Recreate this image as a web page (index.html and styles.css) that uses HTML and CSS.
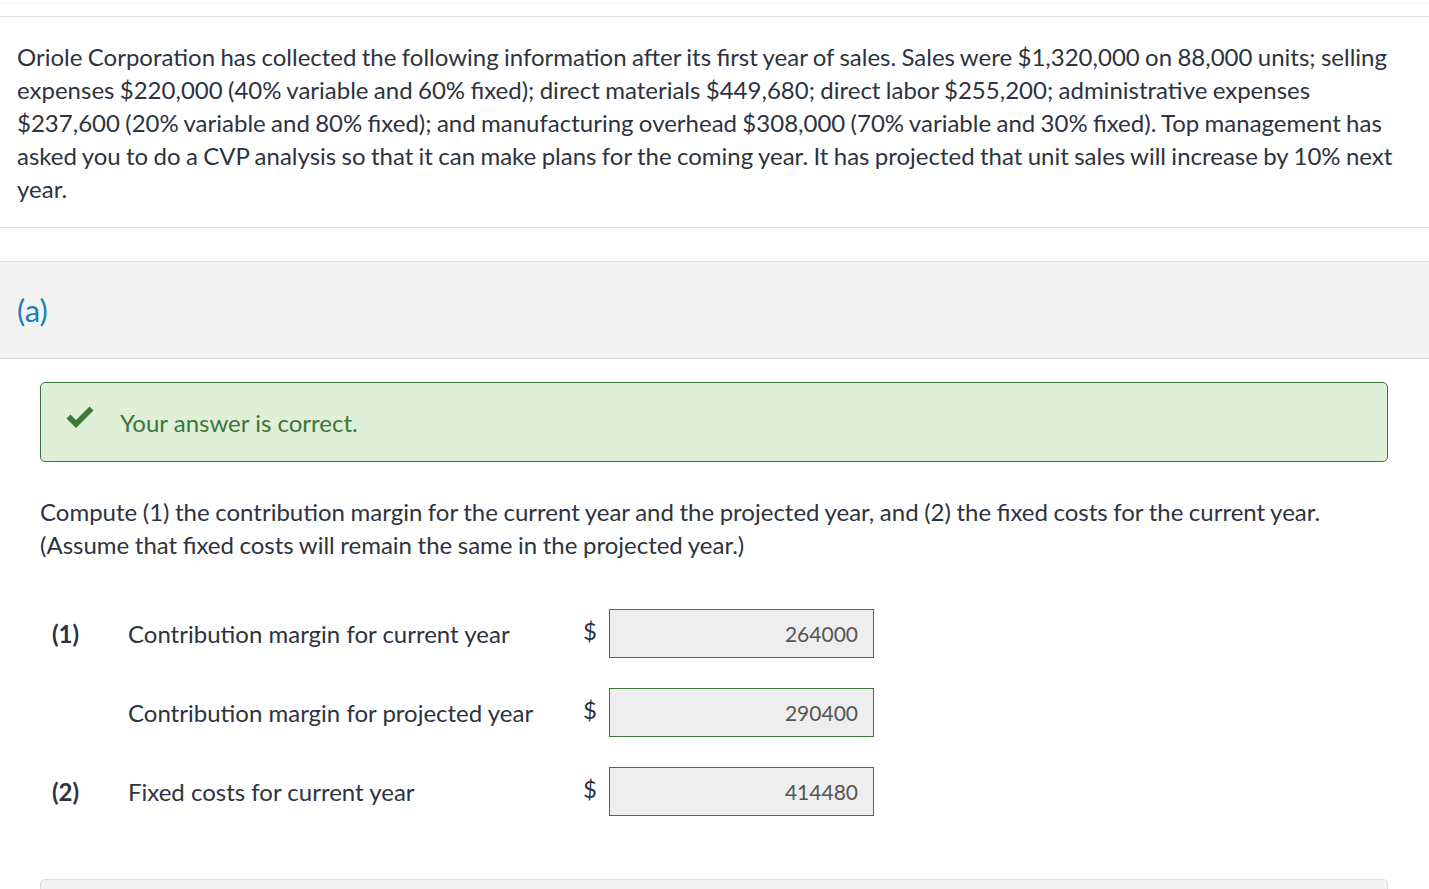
FILE: index.html
```html
<!DOCTYPE html>
<html>
<head>
<meta charset="utf-8">
<link rel="stylesheet" href="styles.css">
</head>
<body>
<div class="topbar"></div>
<div class="stem">
  <p>Oriole Corporation has collected the following information after its first year of sales. Sales were $1,320,000 on 88,000 units; selling expenses $220,000 (40% variable and 60% fixed); direct materials $449,680; direct labor $255,200; administrative expenses $237,600 (20% variable and 80% fixed); and manufacturing overhead $308,000 (70% variable and 30% fixed). Top management has asked you to do a CVP analysis so that it can make plans for the coming year. It has projected that unit sales will increase by 10% next year.</p>
</div>
<div class="part-header"><span class="part-label">(a)</span></div>
<div class="part-body">
  <div class="feedback">
    <svg class="check" width="30" height="24" viewBox="0 0 30 24"><path d="M1.5 12.5 L5.5 8.5 L11 14 L24.5 0.5 L28.5 4.5 L11 22 Z" fill="#3b7a3b"/></svg>
    <span class="feedback-text">Your answer is correct.</span>
  </div>
  <p class="question">Compute (1) the contribution margin for the current year and the projected year, and (2) the fixed costs for the current year. (Assume that fixed costs will remain the same in the projected year.)</p>
  <div class="answers">
    <div class="row">
      <span class="num">(1)</span>
      <span class="label">Contribution margin for current year</span>
      <span class="dollar">$</span>
      <div class="input">264000</div>
    </div>
    <div class="row">
      <span class="num"></span>
      <span class="label">Contribution margin for projected year</span>
      <span class="dollar">$</span>
      <div class="input">290400</div>
    </div>
    <div class="row">
      <span class="num">(2)</span>
      <span class="label">Fixed costs for current year</span>
      <span class="dollar">$</span>
      <div class="input">414480</div>
    </div>
  </div>
  <div class="next-box"></div>
</div>
</body>
</html>
```
FILE: styles.css
```css
html, body {
  margin: 0;
  padding: 0;
  background: #fff;
}
body {
  font-family: Lato, "Open Sans", sans-serif;
  color: #2d3340;
  font-size: 24px;
  overflow: hidden;
  height: 889px;
}
.topbar {
  height: 3px;
  border-bottom: 1px solid #eeeeee;
  margin-bottom: 12px;
}
.stem {
  border-top: 1px solid #dddddd;
  border-bottom: 1px solid #dddddd;
  padding: 23px 17px 22px 17px;
}
.stem p {
  margin: 0;
  line-height: 33px;
  word-spacing: -0.8px;
}
.part-header {
  margin-top: 33px;
  background: #f3f3f3;
  border-top: 1px solid #dddddd;
  border-bottom: 1px solid #dddddd;
  height: 96px;
  display: flex;
  align-items: center;
  padding-left: 17px;
}
.part-label {
  color: #1a7fba;
  font-size: 31px;
}
.part-body {
  padding: 23px 41px 0 40px;
}
.feedback {
  background: #dfefd8;
  border: 1px solid #3c7a3c;
  border-radius: 5px;
  height: 78px;
  display: flex;
  align-items: center;
  padding-left: 24px;
}
.check {
  margin-top: -8px;
  margin-right: 25px;
}
.feedback-text {
  color: #3c763d;
  font-size: 24px;
}
.question {
  margin: 33px 0 0 0;
  line-height: 33px;
  word-spacing: -0.6px;
}
.answers {
  margin-top: 48px;
  display: flex;
  flex-direction: column;
  gap: 30px;
}
.row {
  display: flex;
  align-items: center;
  height: 49px;
}
.num {
  width: 88px;
  padding-left: 12px;
  box-sizing: border-box;
  font-weight: bold;
}
.label {
  width: 455px;
}
.dollar {
  width: 26px;
  margin-top: -6px;
}
.input {
  width: 248px;
  height: 47px;
  border: 1px solid #3c7a3c;
  background: #eeeeee;
  color: #555555;
  font-size: 21px;
  display: flex;
  align-items: center;
  justify-content: flex-end;
  padding-right: 15px;
  box-sizing: content-box;
}
.next-box {
  margin-top: 63px;
  height: 30px;
  background: #f3f3f3;
  border: 1px solid #dddddd;
  border-radius: 5px;
}
```
